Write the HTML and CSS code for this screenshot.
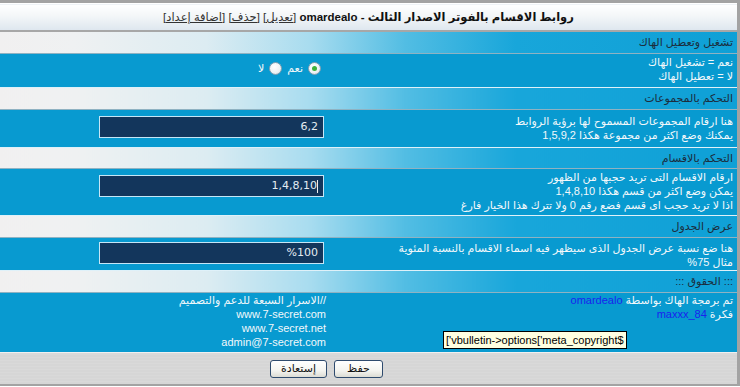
FILE: index.html
```html
<!DOCTYPE html>
<html lang="ar" dir="rtl">
<head>
<meta charset="utf-8">
<title>روابط الاقسام بالفوتر</title>
<link rel="stylesheet" href="styles.css">
</head>
<body>
<div class="frame">
<table class="grid">
  <colgroup><col class="c-lbl"><col class="c-ctl"></colgroup>
  <tr class="title-row">
    <td colspan="2" class="title">روابط الاقسام بالفوتر الاصدار الثالث - <span class="ltr">omardealo</span> <a href="#">[تعديل]</a> <a href="#">[حذف]</a> <a href="#">[اضافة إعداد]</a></td>
  </tr>
  <tr class="head h1"><td colspan="2">تشغيل وتعطيل الهاك</td></tr>
  <tr class="row r1">
    <td class="lbl">نعم = تشغيل الهاك<br>لا = تعطيل الهاك</td>
    <td class="ctl">
      <div class="radios">
        <span class="radio on"></span><span class="rtext">نعم</span>
        <span class="radio"></span><span class="rtext">لا</span>
      </div>
    </td>
  </tr>
  <tr class="head h2"><td colspan="2">التحكم بالمجموعات</td></tr>
  <tr class="row r2">
    <td class="lbl">هنا ارقام المجموعات المسموح لها برؤية الروابط<br>يمكنك وضع اكثر من مجموعة هكذا 1,5,9,2</td>
    <td class="ctl"><div class="field">6,2</div></td>
  </tr>
  <tr class="head h3"><td colspan="2">التحكم بالاقسام</td></tr>
  <tr class="row r3">
    <td class="lbl">ارقام الاقسام التى تريد حجبها من الظهور<br>يمكن وضع اكثر من قسم هكذا 1,4,8,10<br>اذا لا تريد حجب اى قسم فضع رقم 0 ولا تترك هذا الخيار فارغ</td>
    <td class="ctl"><div class="field"><span class="caret"></span>1,4,8,10</div></td>
  </tr>
  <tr class="head h4"><td colspan="2">عرض الجدول</td></tr>
  <tr class="row r4">
    <td class="lbl">هنا ضع نسبة عرض الجدول الذى سيظهر فيه اسماء الاقسام بالنسبة المئوية<br>مثال 75%</td>
    <td class="ctl"><div class="field">%100</div></td>
  </tr>
  <tr class="head h5"><td colspan="2">::: الحقوق :::</td></tr>
  <tr class="row r5">
    <td class="lbl credits">تم برمجة الهاك بواسطة <a class="blue" href="#">omardealo</a><br>فكرة <a class="blue" href="#">maxxx_84</a>
      <span class="tip" dir="ltr">['vbulletin-&gt;options['meta_copyright$</span>
    </td>
    <td class="ctl sites">//الاسرار السبعة للدعم والتصميم<br><span dir="ltr">www.7-secret.com</span><br><span dir="ltr">www.7-secret.net</span><br><span dir="ltr">admin@7-secret.com</span></td>
  </tr>
  <tr class="btn-row">
    <td colspan="2">
      <div class="btns">
        <button class="btn save">حفظ</button>
        <button class="btn">إستعادة</button>
      </div>
    </td>
  </tr>
</table>
</div>
</body>
</html>
```
FILE: styles.css
```css
html, body {
  margin: 0;
  padding: 0;
  background: #ffffff;
}
body {
  font-family: "Liberation Sans", "DejaVu Sans", sans-serif;
  font-size: 11px;
  width: 740px;
  height: 387px;
  overflow: hidden;
}
.frame {
  width: 737px;
  border-top: 3px solid #a3a3a3;
  border-right: 3px solid #a3a3a3;
  border-bottom: 2px solid #a3a3a3;
  background: #fff;
}
.grid {
  width: 737px;
  border-collapse: collapse;
  table-layout: fixed;
}
.c-lbl { width: 406px; }
.c-ctl { width: 331px; }
.grid td {
  padding: 0;
}
.ltr { direction: ltr; unicode-bidi: isolate; }

.title-row td.title {
  height: 26px;
  border-top: 1px solid #ffffff;
  border-bottom: 2px solid #a7a7a7;
  background: linear-gradient(to bottom, #ffffff 0%, #f3f6f8 45%, #dde6ee 100%);
  text-align: center;
  font-weight: bold;
  font-size: 11.5px;
  color: #111;
}
.title a {
  color: #333;
  font-weight: normal;
  text-decoration: underline;
}

.head td {
  height: 21px;
  border-top: 1px solid #dff1f9;
  border-bottom: 1px solid #8fb2c2;
  background: linear-gradient(to left, #0fa0d6 0%, #18a6da 30%, #52bde3 45%, #a8dcef 58%, #dcecf2 72%, #eff1f2 90%, #f1f0f0 100%);
  color: #1c2c3c;
  padding-right: 4px;
  vertical-align: middle;
}
.head.h3 td { height: 20px; }
.head.h4 td { height: 21px; }

.row td {
  background: #089ad0;
  color: #f2f8fb;
  vertical-align: top;
  line-height: 14px;
}
.row td.lbl {
  padding-right: 4px;
}
.row td.ctl {
  padding-right: 7px;
}
.r1 td { height: 32px; }
.r1 td.lbl { padding-top: 1px; }
.r2 td { height: 33px; }
.r2 td.lbl { padding-top: 4px; }
.r3 td { height: 45px; }
.r3 td.lbl { padding-top: 1px; }
.r4 td { height: 29px; }
.r4 td.lbl { padding-top: 3px; }
.r5 td { height: 59px; }

.radios {
  display: flex;
  align-items: center;
  padding-top: 7px;
  padding-right: 3px;
}
.radio {
  width: 11px;
  height: 11px;
  border-radius: 50%;
  border: 1px solid #7d9db0;
  background: radial-gradient(circle at 40% 35%, #ffffff 0%, #eef2f4 60%, #c9d4da 100%);
  position: relative;
  margin-left: 5px;
}
.radio.on::after {
  content: "";
  position: absolute;
  left: 3px;
  top: 3px;
  width: 5px;
  height: 5px;
  border-radius: 50%;
  background: #3cb23c;
}
.rtext { color: #f4f8fa; margin-left: 5px; }

.field {
  width: 213px;
  height: 20px;
  margin-top: 6px;
  border: 1px solid #c6e6f6;
  background: #13365c;
  color: #e4ecf2;
  font-family: "DejaVu Sans", sans-serif;
  font-size: 11px;
  line-height: 20px;
  padding: 0 5px;
  text-align: right;
  direction: ltr;
  position: relative;
}
.r4 .field { margin-top: 4px; }
.caret {
  display: inline-block;
  width: 1px;
  height: 13px;
  background: #f0f0f0;
  float: right;
  margin-top: 4px;
}

.credits {
  position: relative;
  padding-top: 3px;
}
.blue { color: #1a22ee; text-decoration: none; }
.tip {
  position: absolute;
  top: 38px;
  left: 112px;
  background: #ffffe1;
  color: #000;
  border: 1px solid #000;
  padding: 0 2px;
  height: 16px;
  line-height: 16px;
  white-space: nowrap;
  font-family: "Liberation Sans", sans-serif;
  font-size: 11px;
}
.sites {
  line-height: 15px;
  padding-top: 0;
  color: #f2f8fb;
}
.row td.sites { padding-right: 5px; }

.btn-row td {
  height: 31px;
  background: repeating-linear-gradient(to bottom, #d9d9d9 0px, #d9d9d9 2px, #d3d3d3 2px, #d3d3d3 3px);
  border-top: 1px solid #f0f0f0;
}
.btns {
  display: flex;
  gap: 7px;
  padding-right: 354px;
  align-items: center;
}
.btn {
  font-family: "DejaVu Sans", sans-serif;
  font-size: 11px;
  height: 18px;
  padding: 0 8px;
  border: 1px solid #2f4b6e;
  border-radius: 3px;
  background: linear-gradient(to bottom, #ffffff 0%, #f4f4f0 60%, #dcdcd4 100%);
  color: #111;
  line-height: 16px;
}
.btn.save { width: 49px; }
.btn:not(.save) { width: 57px; }
```
